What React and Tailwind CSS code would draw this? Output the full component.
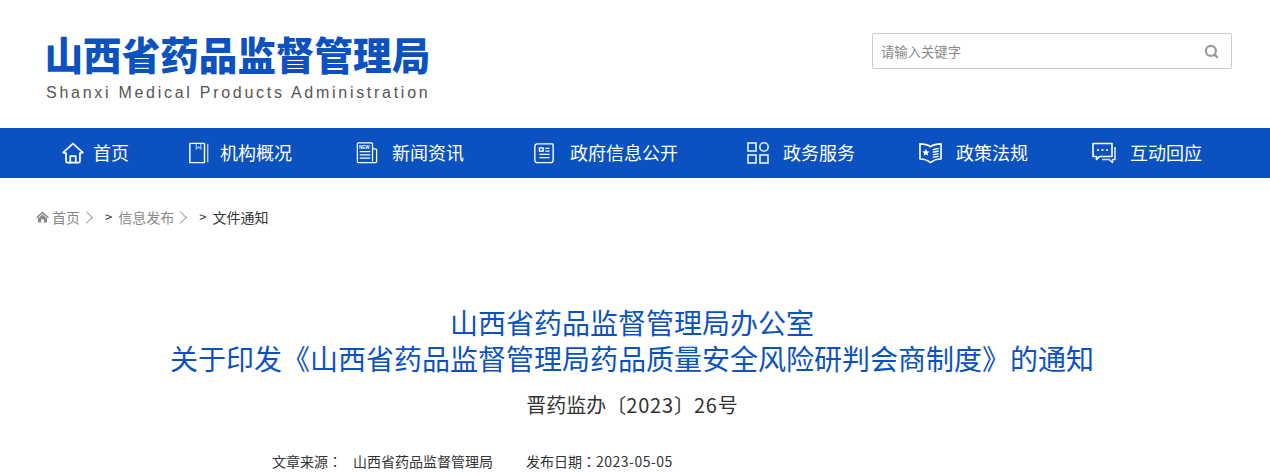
// App.jsx
// Shanxi Medical Products Administration: notice page header
import { Search } from "lucide-react";

const CJK = "font-['Noto_Sans_CJK_SC',sans-serif]";

function HomeIcon() {
  return (
    <svg width="24" height="22" viewBox="0 0 24 24" fill="none" stroke="white" strokeWidth="1.9" strokeLinejoin="round" strokeLinecap="round">
      <path d="M1.2 11.5 12 1.8 22.8 11.5 19.6 12.2V21a1.5 1.5 0 0 1-1.5 1.5H5.9A1.5 1.5 0 0 1 4.4 21V12.2Z" />
      <path d="M9 22.5V15.5H15V22.5" />
    </svg>
  );
}

function BookIcon() {
  return (
    <svg width="22" height="22" viewBox="0 0 22 24" fill="none" stroke="white" strokeWidth="1.6">
      <rect x="1" y="1.5" width="16" height="21" rx="0.5" />
      <path d="M20.5 2V22" strokeOpacity="0.7" />
      <path d="M8 2V7.5L10.5 5.5 13 7.5V2" strokeWidth="1.2" strokeOpacity="0.7" />
    </svg>
  );
}

function NewsIcon() {
  return (
    <svg width="24" height="22" viewBox="0 0 24 24" fill="none" stroke="white" strokeWidth="1.4">
      <path d="M18 7.5H21.5A1 1 0 0 1 22.5 8.5V21A1.5 1.5 0 0 1 21 22.5H3A1.5 1.5 0 0 1 1.5 21V2A1 1 0 0 1 2.5 1H17A1 1 0 0 1 18 2V21" />
      <text x="3.2" y="7.2" fontSize="5" fontWeight="700" fill="white" stroke="none" fontFamily="Liberation Sans, sans-serif">NEW</text>
      <path d="M4 10.5H15.5M4 14H15.5M4 17.5H15.5" />
    </svg>
  );
}

function GovIcon() {
  return (
    <svg width="22" height="22" viewBox="0 0 22 24" fill="none" stroke="white" strokeWidth="1.5">
      <path d="M3.5 2H20A1.2 1.2 0 0 1 21 3.2V20A2.5 2.5 0 0 1 18.5 22.5H3.5A2.5 2.5 0 0 1 1 20V4.5A2.5 2.5 0 0 1 3.5 2Z" />
      <rect x="6" y="6.5" width="4" height="3.5" />
      <path d="M12.5 7H17M12.5 10H17M6 13.5H17M6 17H17" />
    </svg>
  );
}

function GridIcon() {
  return (
    <svg width="22" height="22" viewBox="0 0 22 22" fill="none" stroke="white" strokeWidth="1.6" strokeOpacity="0.9">
      <rect x="1" y="1" width="8" height="8" />
      <circle cx="17" cy="5" r="4.2" />
      <rect x="1" y="13" width="8" height="8" />
      <rect x="13" y="13" width="8" height="8" />
    </svg>
  );
}

function LawIcon() {
  return (
    <svg width="25" height="22" viewBox="0 0 25 24" fill="none" stroke="white" strokeWidth="1.8" strokeLinejoin="round">
      <path d="M1 2C5.5 2 9.5 3 12.5 5 15.5 3 19.5 2 24 2V18.5C19.5 18.5 15.5 19.8 12.5 22.5 9.5 19.8 5.5 18.5 1 18.5Z" />
      <path d="M7.5 7.5 8.7 10 11.4 10.4 9.4 12.2 9.9 14.8 7.5 13.5 5.1 14.8 5.6 12.2 3.6 10.4 6.3 10Z" fill="white" stroke="none" />
      <path d="M15 8.5 21.5 7M15 11.2 21.5 9.8M15 14 21.5 12.7M15 16.8 21.5 15.6" strokeWidth="1.5" />
    </svg>
  );
}

function ChatIcon() {
  return (
    <svg width="24" height="22" viewBox="0 0 24 22" fill="none" stroke="white" strokeWidth="1.6" strokeLinejoin="round">
      <path d="M1 1.5H20V14.5H7.5L4.5 17.5V14.5H1Z" />
      <path d="M23 5V17.5H20.5V20.5L17 17.5H10" strokeOpacity="0.85" />
      <circle cx="6" cy="8" r="1.1" fill="white" stroke="none" />
      <circle cx="10.5" cy="8" r="1.1" fill="white" stroke="none" />
      <circle cx="15" cy="8" r="1.1" fill="white" stroke="none" />
    </svg>
  );
}

function CrumbHome() {
  return (
    <svg width="13" height="12" viewBox="0 0 13 12" className="mr-[3px]">
      <path d="M6.5 0.5 13 6.2 11.9 7.2 6.5 2.5 1.1 7.2 0 6.2Z M2 7.4 6.5 3.5 11 7.4V11.5H7.8V8.3H5.2V11.5H2Z" fill="#888888" />
    </svg>
  );
}

function Chevron() {
  return <span className="ml-[2px] w-[9px] h-[9px] border-t border-r border-[#999999] rotate-45" />;
}

// CJK SC sets the fullwidth colon low and left; the page has it centred
function Colon() {
  return <span className="font-['Noto_Sans_CJK_TC',sans-serif]">：</span>;
}

const NAV = [
  { label: "首页", Icon: HomeIcon, width: "w-[127px]", gap: "gap-[8px]" },
  { label: "机构概况", Icon: BookIcon, width: "w-[167px]", gap: "gap-[10px]" },
  { label: "新闻资讯", Icon: NewsIcon, width: "w-[178px]", gap: "gap-[13px]" },
  { label: "政府信息公开", Icon: GovIcon, width: "w-[214px]", gap: "gap-[15px]" },
  { label: "政务服务", Icon: GridIcon, width: "w-[171px]", gap: "gap-[14px]" },
  { label: "政策法规", Icon: LawIcon, width: "w-[174px]", gap: "gap-[13px]" },
  { label: "互动回应", Icon: ChatIcon, width: "w-[178px]", gap: "gap-[14px]" },
];

export default function App() {
  return (
    <div className={`h-[476px] overflow-hidden bg-white ${CJK}`}>
      {/* Header */}
      <header className="h-[128px] flex justify-between pl-[44.5px] pr-[38px]">
        <div className="pt-[28px]">
          <div className="text-[38.6px] leading-[50px] font-black text-[#0b52c0] whitespace-nowrap">
            山西省药品监督管理局
          </div>
          <div className="mt-[5px] ml-[1.5px] text-[16px] leading-[20px] tracking-[2.72px] text-[#555555] whitespace-nowrap font-['Liberation_Sans',sans-serif]">
            Shanxi Medical Products Administration
          </div>
        </div>
        <div className="pt-[33px]">
          <div className="w-[360px] h-[36px] border border-[#cccccc] rounded-[2px] flex items-center justify-between pl-[8px] pr-[12px]">
            <span className="text-[13.33px] leading-[20px] pt-[1px] text-[#8a8a8a]">请输入关键字</span>
            <Search size={15} strokeWidth={3.5} className="text-[#999999]" />
          </div>
        </div>
      </header>

      {/* Nav */}
      <nav className="h-[50px] bg-[#0b52c0] flex items-center pl-[61px] text-white">
        {NAV.map(({ label, Icon, width, gap }) => (
          <div key={label} className={`${width} ${gap} shrink-0 flex items-center`}>
            <Icon />
            <span className="text-[18px] leading-[24px] pb-[3px] whitespace-nowrap">{label}</span>
          </div>
        ))}
      </nav>

      {/* Breadcrumb */}
      <div className="h-[20px] mt-[29px] pl-[36px] flex items-center text-[13px] whitespace-nowrap">
        <CrumbHome />
        <span className="text-[#888888] text-[14px]">首页</span>
        <Chevron />
        <span className="ml-[14px] text-[#333333]">&gt;</span>
        <span className="ml-[6px] text-[#888888] text-[14px]">信息发布</span>
        <Chevron />
        <span className="ml-[14px] text-[#333333]">&gt;</span>
        <span className="ml-[6px] text-[#333333] text-[14px]">文件通知</span>
      </div>

      {/* Title */}
      <main className="pt-[77px] pr-[6px] text-center">
        <h1 className="text-[28px] leading-[36px] text-[#0b52c0] font-normal">
          山西省药品监督管理局办公室
          <br />
          关于印发《山西省药品监督管理局药品质量安全风险研判会商制度》的通知
        </h1>
        <p className="mt-[11px] text-[20px] leading-[36px] text-[#333333]">
          晋药监办〔<span className="tracking-[0.8px]">2023</span>〕<span className="tracking-[0.8px]">26</span>号
        </p>
      </main>

      <div className="mt-[28px] pl-[272px] flex text-[14px] leading-[20px] text-[#333333] whitespace-nowrap">
        <span>文章来源<Colon /></span>
        <span className="ml-[11px]">山西省药品监督管理局</span>
        <span className="ml-[33px]">发布日期<Colon /><span className="tracking-[0.5px]">2023-05-05</span></span>
      </div>
    </div>
  );
}
